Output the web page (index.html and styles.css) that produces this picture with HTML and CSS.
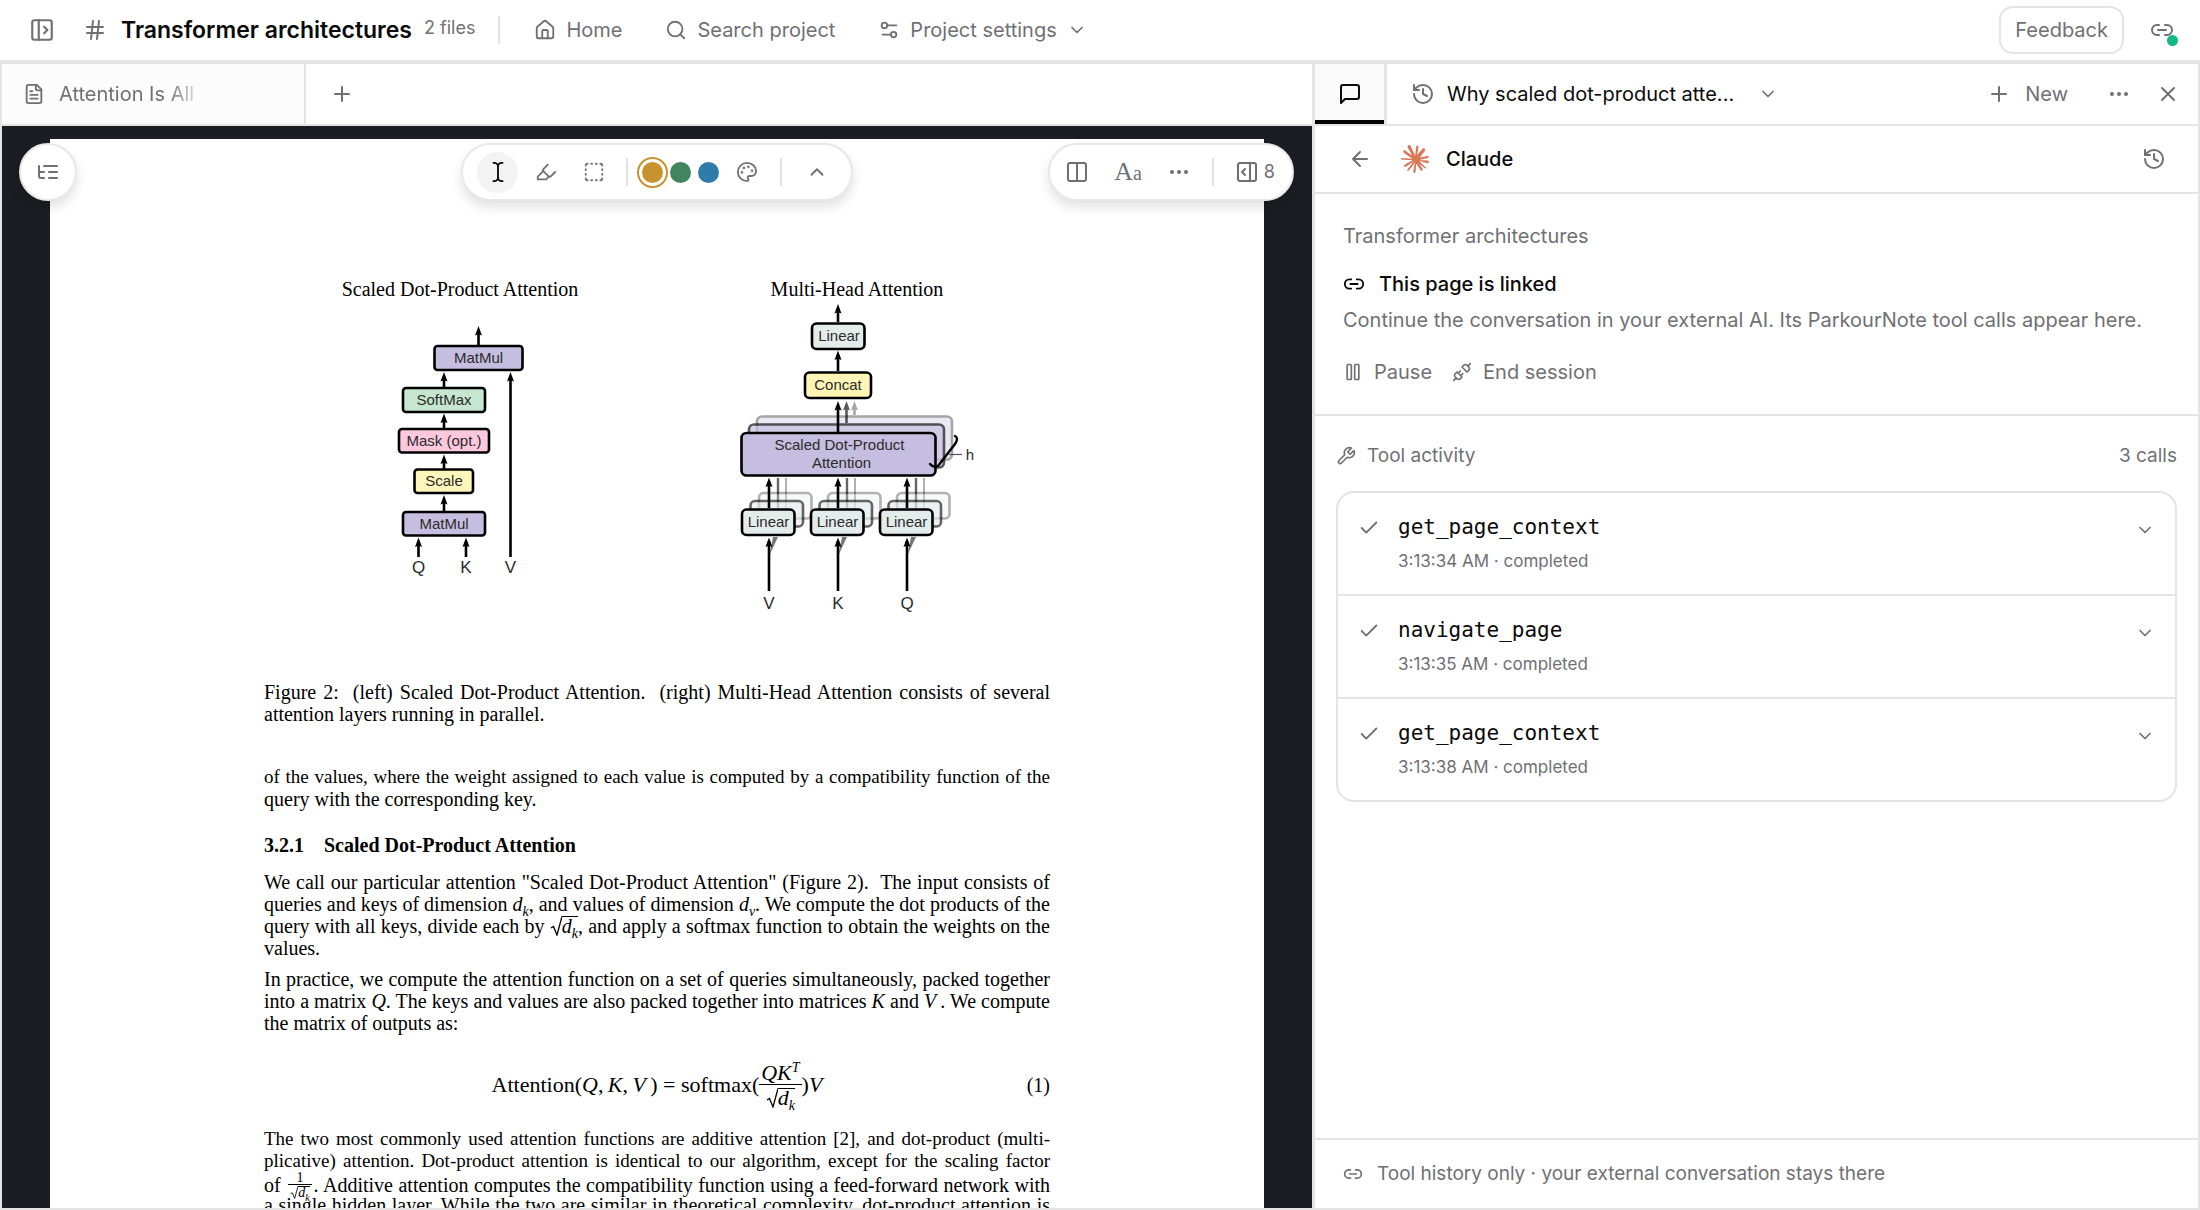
FILE: index.html
```html
<!DOCTYPE html>
<html lang="en">
<head>
<meta charset="utf-8">
<meta name="viewport" content="width=device-width, initial-scale=1">
<title>Transformer architectures</title>
<link rel="stylesheet" href="styles.css">
</head>
<body>
<svg class="sprite" aria-hidden="true">
  <symbol id="panel-left" viewBox="0 0 24 24"><rect x="3" y="3" width="18" height="18" rx="2"/><path d="M9 3v18M14 9l3 3-3 3"/></symbol>
  <symbol id="hash" viewBox="0 0 24 24"><path d="M4 9h16M4 15h16M10 3 8 21M16 3l-2 18"/></symbol>
  <symbol id="home" viewBox="0 0 24 24"><path d="M15 21v-8a1 1 0 0 0-1-1h-4a1 1 0 0 0-1 1v8"/><path d="M3 10a2 2 0 0 1 .709-1.528l7-6a2 2 0 0 1 2.582 0l7 6A2 2 0 0 1 21 10v9a2 2 0 0 1-2 2H5a2 2 0 0 1-2-2z"/></symbol>
  <symbol id="search" viewBox="0 0 24 24"><circle cx="11" cy="11" r="8"/><path d="m21 21-4.3-4.3"/></symbol>
  <symbol id="settings" viewBox="0 0 24 24"><path d="M20 7h-9M14 17H5"/><circle cx="17" cy="17" r="3"/><circle cx="7" cy="7" r="3"/></symbol>
  <symbol id="chevron-down" viewBox="0 0 24 24"><path d="m6 9 6 6 6-6"/></symbol>
  <symbol id="chevron-up" viewBox="0 0 24 24"><path d="m18 15-6-6-6 6"/></symbol>
  <symbol id="link" viewBox="0 0 24 24"><path d="M9 17H7A5 5 0 0 1 7 7h2M15 7h2a5 5 0 1 1 0 10h-2M8 12h8"/></symbol>
  <symbol id="file" viewBox="0 0 24 24"><path d="M15 2H6a2 2 0 0 0-2 2v16a2 2 0 0 0 2 2h12a2 2 0 0 0 2-2V7Z"/><path d="M14 2v4a2 2 0 0 0 2 2h4M10 9H8M16 13H8M16 17H8"/></symbol>
  <symbol id="plus" viewBox="0 0 24 24"><path d="M5 12h14M12 5v14"/></symbol>
  <symbol id="outline" viewBox="0 0 24 24"><path d="M21 12h-8M21 6H8M21 18h-8M3 6v4c0 1.100.9 2 2 2h3M3 10v6c0 1.100.9 2 2 2h3"/></symbol>
  <symbol id="ibeam" viewBox="0 0 24 24"><path d="M17 22h-1a4 4 0 0 1-4-4V6a4 4 0 0 1 4-4h1M7 22h1a4 4 0 0 0 4-4v-1M7 2h1a4 4 0 0 1 4 4v1"/></symbol>
  <symbol id="highlighter" viewBox="0 0 24 24"><path d="m9 11-6 6v3h9l3-3"/><path d="m22 12-4.600 4.600a2 2 0 0 1-2.800 0l-5.200-5.200a2 2 0 0 1 0-2.800L14 4"/></symbol>
  <symbol id="marquee" viewBox="0 0 24 24"><path d="M5 3a2 2 0 0 0-2 2M19 3a2 2 0 0 1 2 2M21 19a2 2 0 0 1-2 2M5 21a2 2 0 0 1-2-2M9 3h1M9 21h1M14 3h1M14 21h1M3 9v1M21 9v1M3 14v1M21 14v1"/></symbol>
  <symbol id="palette" viewBox="0 0 24 24"><circle cx="13.500" cy="6.500" r=".5"/><circle cx="17.500" cy="10.500" r=".5"/><circle cx="8.500" cy="7.500" r=".5"/><circle cx="6.500" cy="12.500" r=".5"/><path d="M12 2C6.500 2 2 6.500 2 12s4.500 10 10 10c.926 0 1.648-.746 1.648-1.688 0-.437-.18-.835-.437-1.125-.29-.289-.438-.652-.438-1.125a1.640 1.640 0 0 1 1.668-1.668h1.996c3.051 0 5.555-2.503 5.555-5.554C21.965 6.012 17.461 2 12 2z"/></symbol>
  <symbol id="columns" viewBox="0 0 24 24"><rect x="3" y="3" width="18" height="18" rx="2"/><path d="M12 3v18"/></symbol>
  <symbol id="panel-right" viewBox="0 0 24 24"><rect x="3" y="3" width="18" height="18" rx="2"/><path d="M15 3v18M10 15l-3-3 3-3"/></symbol>
  <symbol id="dots" viewBox="0 0 24 24"><circle cx="12" cy="12" r="1"/><circle cx="19" cy="12" r="1"/><circle cx="5" cy="12" r="1"/></symbol>
  <symbol id="chat" viewBox="0 0 24 24"><path d="M21 15a2 2 0 0 1-2 2H7l-4 4V5a2 2 0 0 1 2-2h14a2 2 0 0 1 2 2z"/></symbol>
  <symbol id="history" viewBox="0 0 24 24"><path d="M3 12a9 9 0 1 0 9-9 9.750 9.750 0 0 0-6.740 2.740L3 8"/><path d="M3 3v5h5M12 7v5l4 2"/></symbol>
  <symbol id="close" viewBox="0 0 24 24"><path d="M18 6 6 18M6 6l12 12"/></symbol>
  <symbol id="back" viewBox="0 0 24 24"><path d="m12 19-7-7 7-7M19 12H5"/></symbol>
  <symbol id="pause" viewBox="0 0 24 24"><rect x="14" y="3" width="5" height="18" rx="1"/><rect x="5" y="3" width="5" height="18" rx="1"/></symbol>
  <symbol id="unplug" viewBox="0 0 24 24"><path d="m19 5 3-3M2 22l3-3M6.300 20.300a2.400 2.400 0 0 0 3.400 0L12 18l-6-6-2.300 2.300a2.400 2.400 0 0 0 0 3.400ZM7.500 13.500 10 11M10.500 16.500 13 14M12 6l6 6 2.300-2.300a2.400 2.400 0 0 0 0-3.400l-2.600-2.600a2.400 2.400 0 0 0-3.400 0Z"/></symbol>
  <symbol id="wrench" viewBox="0 0 24 24"><path d="M14.700 6.300a1 1 0 0 0 0 1.400l1.600 1.600a1 1 0 0 0 1.400 0l3.770-3.770a6 6 0 0 1-7.940 7.940l-6.910 6.910a2.120 2.120 0 0 1-3-3l6.910-6.910a6 6 0 0 1 7.940-7.940l-3.760 3.760z"/></symbol>
  <symbol id="check" viewBox="0 0 24 24"><path d="M20 6 9 17l-5-5"/></symbol>
  <symbol id="radical" viewBox="0 0 12 20" preserveAspectRatio="none"><path d="M1 12l2.500-1.500L7 19 12 .5" fill="none" stroke="currentColor" stroke-width="1.300"/></symbol>
</svg>

<div class="app">
  <header class="topbar">
    <button class="icon-btn" aria-label="Open sidebar"><svg class="icon i26"><use href="#panel-left"/></svg></button>
    <div class="project">
      <svg class="icon i24"><use href="#hash"/></svg>
      <h1 class="project-name">Transformer architectures</h1>
      <span class="project-count">2 files</span>
    </div>
    <nav class="topnav">
      <a class="nav-link" href="#home"><svg class="icon i22"><use href="#home"/></svg>Home</a>
      <button class="nav-link"><svg class="icon i22"><use href="#search"/></svg>Search project</button>
      <button class="nav-link"><svg class="icon i22"><use href="#settings"/></svg>Project settings<svg class="icon i20"><use href="#chevron-down"/></svg></button>
    </nav>
    <button class="feedback">Feedback</button>
    <button class="icon-btn status" aria-label="Linked session"><svg class="icon i24"><use href="#link"/></svg><span class="status-dot"></span></button>
  </header>

  <main class="workspace">
    <section class="reader">
      <div class="tabs">
        <button class="tab"><svg class="icon i22"><use href="#file"/></svg><span class="tab-title">Attention Is All You Need</span></button>
        <button class="icon-btn tab-add" aria-label="New tab"><svg class="icon i24"><use href="#plus"/></svg></button>
      </div>
      <div class="viewer">
        <div class="pill pill-left">
          <button class="icon-btn" aria-label="Outline"><svg class="icon i24"><use href="#outline"/></svg></button>
        </div>
        <div class="pill pill-center">
          <button class="tool active" aria-label="Select text"><svg class="icon i22"><use href="#ibeam"/></svg></button>
          <button class="tool" aria-label="Highlight"><svg class="icon i22"><use href="#highlighter"/></svg></button>
          <button class="tool" aria-label="Select area"><svg class="icon i22"><use href="#marquee"/></svg></button>
          <span class="rule"></span>
          <span class="swatches">
            <button class="swatch gold" aria-label="Gold"></button>
            <button class="swatch green" aria-label="Green"></button>
            <button class="swatch blue" aria-label="Blue"></button>
          </span>
          <button class="icon-btn" aria-label="More colors"><svg class="icon i22"><use href="#palette"/></svg></button>
          <span class="rule"></span>
          <button class="icon-btn collapse" aria-label="Collapse"><svg class="icon i22"><use href="#chevron-up"/></svg></button>
        </div>
        <div class="pill pill-right">
          <button class="icon-btn" aria-label="Page layout"><svg class="icon i24"><use href="#columns"/></svg></button>
          <button class="icon-btn typeface" aria-label="Typography">A<span class="typeface-small">a</span></button>
          <button class="icon-btn" aria-label="More"><svg class="icon i24"><use href="#dots"/></svg></button>
          <span class="rule"></span>
          <button class="icon-btn notes"><svg class="icon i24"><use href="#panel-right"/></svg>8</button>
        </div>

        <article class="sheet">
          <div class="column">
            <figure class="figure">
              <svg class="diagram" viewBox="264 280 786 340" role="img" aria-label="Scaled dot-product attention and multi-head attention">
                <defs>
                  <g id="lin"><rect width="52.500" height="25.500" rx="4.500" fill="#e4eceb" stroke="#000" stroke-width="2.600"/></g>
                  <g id="head">
                    <path d="M45 510 45 478" stroke="#000" stroke-width="2" opacity=".3"/>
                    <path d="M37 510 37 478" stroke="#000" stroke-width="2.400" opacity=".6"/>
                    <use href="#lin" x="18" y="493" opacity=".3"/>
                    <use href="#lin" x="9.500" y="501" opacity=".6"/>
                    <path d="M28.500 555 37 537H32Z" fill="#777"/>
                    <use href="#lin" x="1" y="509.500"/>
                    <path class="bar" d="M28 508V482M28 591V541"/>
                    <path class="tip" d="M28 477.500 31.500 487Q28 485 24.500 487ZM28 537.500 31.500 547Q28 545 24.500 547Z"/>
                    <text class="label" x="27.500" y="527">Linear</text>
                  </g>
                </defs>
                <text class="fig-title" x="460" y="296">Scaled Dot-Product Attention</text>
                <g class="boxes">
                  <rect x="434.500" y="346" width="88" height="24" rx="3" fill="#c5bee0"/>
                  <rect x="403" y="388" width="82" height="24" rx="3" fill="#c6e6cf"/>
                  <rect x="399" y="429" width="90" height="23.500" rx="3" fill="#fbc8dd"/>
                  <rect x="414.500" y="469.500" width="58.500" height="23.500" rx="3" fill="#fdf6ba"/>
                  <rect x="403" y="512" width="82" height="23.500" rx="3" fill="#c5bee0"/>
                </g>
                <path class="bar" d="M478.500 345V331M444 387V377M444 428V418M444 469V459M444 511V500M418.500 557V542M466 557V542M510.500 557V377"/>
                <path class="tip" d="M478.500 326l3.500 9.500q-3.500-2-7 0ZM444 372l3.500 9.500q-3.500-2-7 0ZM444 413.500l3.500 9.500q-3.500-2-7 0ZM444 454.500l3.500 9.500q-3.500-2-7 0ZM444 495l3.500 9.500q-3.500-2-7 0ZM418.500 537.500l3.500 9.500q-3.500-2-7 0ZM466 537.500l3.500 9.500q-3.500-2-7 0ZM510.500 372l3.500 9.500q-3.500-2-7 0Z"/>
                <g class="label">
                  <text x="478.500" y="363">MatMul</text>
                  <text x="444" y="405">SoftMax</text>
                  <text x="444" y="446">Mask (opt.)</text>
                  <text x="444" y="486">Scale</text>
                  <text x="444" y="529">MatMul</text>
                </g>
                <g class="label var">
                  <text x="418.500" y="573">Q</text><text x="466" y="573">K</text><text x="510.500" y="573">V</text>
                </g>

                <text class="fig-title" x="857" y="296">Multi-Head Attention</text>
                <g class="boxes">
                  <rect x="757" y="416.500" width="195" height="43" rx="5" fill="#c5bee0" opacity=".35"/>
                  <rect x="749" y="424.500" width="195" height="43" rx="5" fill="#c5bee0" opacity=".65"/>
                  <rect x="741.500" y="433" width="194" height="42.500" rx="5" fill="#c5bee0"/>
                  <rect x="812" y="323.500" width="52.500" height="25.500" rx="4.500" fill="#e4eceb"/>
                  <rect x="805" y="372.500" width="66" height="25.500" rx="4.500" fill="#fff6b6"/>
                </g>
                <g opacity=".35"><path class="bar" d="M854.500 415V406"/><path class="tip" d="M854.500 401l3.500 9.500q-3.500-2-7 0Z"/></g>
                <g opacity=".65"><path class="bar" d="M846.500 423V406"/><path class="tip" d="M846.500 401l3.500 9.500q-3.500-2-7 0Z"/></g>
                <path class="bar" d="M838 322V309M838 371V355M838 432V406"/>
                <path class="tip" d="M838 304l3.500 9.500q-3.500-2-7 0ZM838 350.500l3.500 9.500q-3.500-2-7 0ZM838 401l3.500 9.500q-3.500-2-7 0Z"/>
                <path d="M930 464q3 4 8 2l17-22q4-6 0-8" fill="none" stroke="#000" stroke-width="2.400" stroke-linecap="round"/>
                <path d="M949 454.500h13" stroke="#555" stroke-width="1.200"/>
                <g class="label">
                  <text x="839" y="341">Linear</text>
                  <text x="838" y="390">Concat</text>
                  <text x="839.500" y="450">Scaled Dot-Product</text>
                  <text x="841.500" y="468">Attention</text>
                  <text x="970" y="460">h</text>
                </g>
                <use href="#head" x="741"/>
                <use href="#head" x="810"/>
                <use href="#head" x="879"/>
                <g class="label var">
                  <text x="769" y="609">V</text><text x="838" y="609">K</text><text x="907" y="609">Q</text>
                </g>
              </svg>
              <figcaption class="caption"><span class="full">Figure 2:&nbsp; (left) Scaled Dot-Product Attention.&nbsp; (right) Multi-Head Attention consists of several</span> <span class="line">attention layers running in parallel.</span></figcaption>
            </figure>
            <p class="para"><span class="full tight">of the values, where the weight assigned to each value is computed by a compatibility function of the</span> <span class="line">query with the corresponding key.</span></p>
            <h2 class="subhead"><span>3.2.1</span><span>Scaled Dot-Product Attention</span></h2>
            <p class="para"><span class="full">We call our particular attention "Scaled Dot-Product Attention" (Figure 2).&nbsp; The input consists of</span> <span class="full">queries and keys of dimension <i>d<sub>k</sub></i>, and values of dimension <i>d<sub>v</sub></i>. We compute the dot products of the</span> <span class="full">query with all keys, divide each by <span class="root"><svg class="root-sign"><use href="#radical"/></svg><i class="radicand">d<sub>k</sub></i></span>, and apply a softmax function to obtain the weights on the</span> <span class="line">values.</span></p>
            <p class="para"><span class="full">In practice, we compute the attention function on a set of queries simultaneously, packed together</span> <span class="full">into a matrix <i>Q</i>. The keys and values are also packed together into matrices <i>K</i> and <i>V</i>&thinsp;. We compute</span> <span class="line">the matrix of outputs as:</span></p>
            <div class="equation">
              <span class="formula">Attention(<i>Q</i>,&thinsp;<i>K</i>,&thinsp;<i>V</i>&thinsp;) = softmax(<span class="frac"><span class="num"><i>QK<sup>T</sup></i></span><span class="den"><span class="root"><svg class="root-sign"><use href="#radical"/></svg><i class="radicand">d<sub>k</sub></i></span></span></span>)<i>V</i></span>
              <span class="eq-number">(1)</span>
            </div>
            <p class="para"><span class="full tight">The two most commonly used attention functions are additive attention [2], and dot-product (multi-</span> <span class="full tight">plicative) attention. Dot-product attention is identical to our algorithm, except for the scaling factor</span> <span class="full">of <span class="frac small"><span class="num">1</span><span class="den"><span class="root"><svg class="root-sign"><use href="#radical"/></svg><i class="radicand">d<sub>k</sub></i></span></span></span>. Additive attention computes the compatibility function using a feed-forward network with</span> <span class="full">a single hidden layer. While the two are similar in theoretical complexity, dot-product attention is</span></p>
          </div>
        </article>
      </div>
    </section>

    <aside class="panel">
      <div class="panel-tabs">
        <button class="chat-tab" aria-label="Chat"><svg class="icon i24"><use href="#chat"/></svg></button>
        <button class="thread"><svg class="icon i24"><use href="#history"/></svg><span class="thread-title">Why scaled dot-product atte...</span><svg class="icon i20"><use href="#chevron-down"/></svg></button>
        <div class="panel-actions">
          <button class="new-btn"><svg class="icon i24"><use href="#plus"/></svg>New</button>
          <button class="icon-btn" aria-label="More"><svg class="icon i24"><use href="#dots"/></svg></button>
          <button class="icon-btn" aria-label="Close"><svg class="icon i24"><use href="#close"/></svg></button>
        </div>
      </div>
      <div class="agent">
        <button class="icon-btn" aria-label="Back"><svg class="icon i24"><use href="#back"/></svg></button>
        <svg class="claude" viewBox="0 0 24 24" aria-hidden="true"><path d="m4.7144 15.9555 4.7174-2.6471.079-.2307-.079-.1275h-.2307l-.7893-.0486-2.6956-.0729-2.3375-.0971-2.2646-.1214-.5707-.1215-.5343-.7042.0546-.3522.4797-.3218.686.0608 1.5179.1032 2.2767.1578 1.6514.0972 2.4468.255h.3886l.0546-.1579-.1336-.0971-.1032-.0972L6.973 9.8356l-2.55-1.6879-1.3356-.9714-.7225-.4918-.3643-.4614-.1578-1.0078.6557-.7225.8803.0607.2246.0607.8925.686 1.9064 1.4754 2.4893 1.8336.3643.3035.1457-.1032.0182-.0728-.164-.2733-1.3539-2.4467-1.445-2.4893-.6435-1.032-.17-.6194c-.0607-.255-.1032-.4674-.1032-.7285L6.287.1335 6.6997 0l.9957.1336.419.3642.6192 1.4147 1.0018 2.2282 1.5543 3.0296.4553.8985.2429.8318.091.255h.1579v-.1457l.1275-1.706.2368-2.0947.2307-2.6957.0789-.7589.3764-.9107.7468-.4918.5828.2793.4797.686-.0668.4433-.2853 1.8517-.5586 2.9021-.3643 1.9429h.2125l.2429-.2429.9835-1.3053 1.6514-2.0643.7286-.8196.85-.9046.5464-.4311h1.0321l.759 1.1293-.34 1.1657-1.0625 1.3478-.8804 1.1414-1.2628 1.7-.7893 1.36.0729.1093.1882-.0183 2.8535-.607 1.5421-.2794 1.8396-.3157.8318.3886.091.3946-.3278.8075-1.967.4857-2.3072.4614-3.4364.8136-.0425.0304.0486.0607 1.5482.1457.6618.0364h1.621l3.0175.2247.7892.522.4736.6376-.079.4857-1.2142.6193-1.6393-.3886-3.825-.9107-1.3113-.3279h-.1822v.1093l1.0929 1.0686 2.0035 1.8092 2.5075 2.3314.1275.5768-.3218.4554-.34-.0486-2.2039-1.6575-.85-.7468-1.9246-1.621h-.1275v.17l.4432.6496 2.3436 3.5214.1214 1.0807-.17.3521-.6071.2125-.6679-.1214-1.3721-1.9246L14.38 17.959l-1.1414-1.9428-.1397.079-.674 7.2552-.3156.3703-.7286.2793-.6071-.4614-.3218-.7468.3218-1.4753.3886-1.9246.3157-1.53.2853-1.9004.17-.6314-.0121-.0425-.1397.0182-1.4328 1.9672-2.1796 2.9446-1.7243 1.8456-.4128.164-.7164-.3704.0667-.6618.4008-.5889 2.386-3.0357 1.4389-1.882.929-1.0868-.0062-.1579h-.0546l-6.3385 4.1164-1.1293.1457-.4857-.4554.0608-.7467.2307-.2429 1.9064-1.3114Z"/></svg>
        <h2 class="agent-name">Claude</h2>
        <button class="icon-btn agent-history" aria-label="History"><svg class="icon i24"><use href="#history"/></svg></button>
      </div>
      <section class="session">
        <p class="session-project">Transformer architectures</p>
        <h3 class="session-title"><svg class="icon i22"><use href="#link"/></svg>This page is linked</h3>
        <p class="session-text">Continue the conversation in your external AI. Its ParkourNote tool calls appear here.</p>
        <div class="session-actions">
          <button class="text-btn"><svg class="icon i20"><use href="#pause"/></svg>Pause</button>
          <button class="text-btn"><svg class="icon i20"><use href="#unplug"/></svg>End session</button>
        </div>
      </section>
      <section class="activity">
        <div class="activity-head">
          <h3 class="activity-title"><svg class="icon i20"><use href="#wrench"/></svg>Tool activity</h3>
          <span>3 calls</span>
        </div>
        <ul class="calls">
          <li><button class="call"><svg class="icon i22"><use href="#check"/></svg><span class="call-body"><span class="call-name">get_page_context</span><span class="call-meta">3:13:34 AM · completed</span></span><svg class="icon i20 call-toggle"><use href="#chevron-down"/></svg></button></li>
          <li><button class="call"><svg class="icon i22"><use href="#check"/></svg><span class="call-body"><span class="call-name">navigate_page</span><span class="call-meta">3:13:35 AM · completed</span></span><svg class="icon i20 call-toggle"><use href="#chevron-down"/></svg></button></li>
          <li><button class="call"><svg class="icon i22"><use href="#check"/></svg><span class="call-body"><span class="call-name">get_page_context</span><span class="call-meta">3:13:38 AM · completed</span></span><svg class="icon i20 call-toggle"><use href="#chevron-down"/></svg></button></li>
        </ul>
      </section>
      <footer class="panel-foot"><svg class="icon i20"><use href="#link"/></svg>Tool history only · your external conversation stays there</footer>
    </aside>
  </main>
</div>
</body>
</html>
```
FILE: styles.css
```css
:root {
  --line: #e4e4e5;
  --muted: #707074;
  --ink: #0a0a0a;
  --dark: #1a1d21;
  --serif: "Liberation Serif", "Times New Roman", serif;
}

*, *::before, *::after { box-sizing: border-box; }

body {
  margin: 0;
  font: 20px/28px Inter, "Liberation Sans", sans-serif;
  color: var(--muted);
  background: #fff;
}

h1, h2, h3, p, ul, figure { margin: 0; padding: 0; font: inherit; }
ul { list-style: none; }

button {
  margin: 0;
  padding: 0;
  border: 0;
  background: none;
  color: inherit;
  font: inherit;
  cursor: pointer;
}

.sprite { position: absolute; width: 0; height: 0; }

.icon {
  flex: none;
  display: block;
  fill: none;
  stroke: currentColor;
  stroke-width: 2;
  stroke-linecap: round;
  stroke-linejoin: round;
}
.i20 { width: 20px; height: 20px; }
.i22 { width: 22px; height: 22px; }
.i24 { width: 24px; height: 24px; }
.i26 { width: 26px; height: 26px; }

.icon-btn { display: flex; align-items: center; justify-content: center; }

.app { display: flex; flex-direction: column; height: 100vh; }

/* Top bar */
.topbar {
  flex: none;
  display: flex;
  align-items: center;
  height: 64px;
  padding: 0 26px 0 29px;
  border-bottom: 4px solid var(--line);
}
.project { display: flex; align-items: center; margin-left: 28px; }
.project-name { margin-left: 14px; font-size: 23px; font-weight: 600; color: var(--ink); }
.project-count { margin: 0 23px 4px 12px; font-size: 18px; line-height: 24px; }
.topnav {
  display: flex;
  align-items: center;
  gap: 43px;
  height: 28px;
  padding-left: 34px;
  border-left: 2px solid var(--line);
}
.nav-link { display: flex; align-items: center; gap: 10px; color: inherit; text-decoration: none; }
.feedback {
  height: 48px;
  margin-left: auto;
  padding: 0 14px;
  border: 2px solid var(--line);
  border-radius: 14px;
}
.status { position: relative; margin-left: 26px; }
.status-dot {
  position: absolute;
  right: -4px;
  bottom: -4px;
  width: 11px;
  height: 11px;
  border-radius: 50%;
  background: #10b981;
}

.workspace {
  flex: 1;
  min-height: 0;
  display: grid;
  grid-template-columns: minmax(0, 1312fr) minmax(0, 888fr);
  border-bottom: 2px solid var(--line);
}

/* Reader */
.reader { display: flex; flex-direction: column; min-height: 0; border-left: 2px solid var(--line); }
.tabs { flex: none; display: flex; height: 62px; border-bottom: 2px solid var(--line); }
.tab {
  display: flex;
  align-items: center;
  gap: 14px;
  width: 304px;
  padding: 0 100px 0 21px;
  border-right: 2px solid var(--line);
  background: #fcfcfc;
}
.tab-title {
  overflow: hidden;
  white-space: nowrap;
  mask-image: linear-gradient(90deg, #000 75%, transparent);
}
.tab-add { margin-left: 24px; }

.viewer { position: relative; flex: 1; min-height: 0; overflow: hidden; padding: 13px 48px 0; background: var(--dark); }

.pill {
  position: absolute;
  top: 17px;
  display: flex;
  align-items: center;
  height: 58px;
  border: 2px solid #e8e8ea;
  border-radius: 29px;
  background: #fff;
  box-shadow: 0 6px 12px rgb(0 0 0 / 12%);
}
.pill-left { left: 17px; width: 58px; justify-content: center; }
.pill-center { left: 50%; transform: translateX(-50%); padding: 0 14px 0 14px; }
.pill-right { right: 18px; gap: 25px; padding: 0 17px 0 15px; }
.rule { width: 2px; height: 28px; background: var(--line); }
.tool { display: flex; align-items: center; justify-content: center; width: 41px; height: 41px; margin-right: 7px; border-radius: 50%; }
.tool.active { background: #f3f3f3; color: var(--ink); }
.tool + .rule { margin-left: 5px; }
.swatches { display: flex; gap: 7px; margin: 0 17px 0 14px; }
.swatch { width: 21px; height: 21px; border-radius: 50%; }
.gold { background: #c8922e; box-shadow: 0 0 0 3px #fff, 0 0 0 5px #c8922e; }
.green { background: #41855f; }
.blue { background: #2f7cab; }
.pill-center .rule + .collapse { margin: 0 9px 0 24px; }
.pill-center .icon-btn + .rule { margin-left: 22px; }
.pill-right .rule { margin: 0 -4px; }
.typeface { align-items: baseline; font: 26px/28px var(--serif); }
.typeface-small { font-size: 20px; }
.notes { gap: 5px; font-size: 18px; }

/* Document page */
.sheet { min-height: 100%; padding-top: 141px; background: #fff; }
.column { max-width: 786px; margin: 0 auto; font: 20px/22px var(--serif); color: #000; }
.diagram { display: block; width: 100%; margin-bottom: 61px; overflow: visible; }
.full, .line { display: block; white-space: nowrap; height: 22px; }
.full { text-align: justify; text-align-last: justify; }
.tight { font-size: 19px; }
.caption { margin-bottom: 41px; }
.subhead { display: flex; gap: 20px; margin: 24px 0 15px; font-weight: 700; }
.para + .para { margin-top: 9px; }
.column sub, .column sup { font-size: 14px; line-height: 0; }

.root { display: inline-flex; align-items: baseline; }
.root-sign { align-self: stretch; width: 12px; height: 20px; }
.radicand { border-top: 1px solid #000; line-height: 18px; }
.equation { display: grid; grid-template-columns: 1fr auto 1fr; align-items: center; height: 94px; padding-top: 8px; }
.formula { grid-column: 2; display: flex; align-items: center; white-space: pre; font-size: 22px; }
.eq-number { justify-self: end; }
.frac { display: inline-flex; flex-direction: column; align-items: center; }
.num { padding: 0 2px; }
.den { align-self: stretch; display: flex; justify-content: center; border-top: 1px solid #000; padding-top: 3px; }
.small { font-size: 14px; line-height: 12px; vertical-align: 10px; margin: 0 2px; }
.small .den { padding: 1px 2px 0; }
.small .radicand { line-height: 12px; }
.small .root-sign { width: 8px; height: 13px; }
.column .small sub { font-size: 10px; }

.fig-title { font: 20px var(--serif); text-anchor: middle; }
.label { font: 15px "Liberation Sans", Arial, sans-serif; text-anchor: middle; fill: #2b2b2b; }
.var { font-size: 17px; }
.boxes { stroke: #000; stroke-width: 2.6px; }
.bar { fill: none; stroke: #000; stroke-width: 2.6px; }

/* Side panel */
.panel {
  display: flex;
  flex-direction: column;
  min-height: 0;
  border-left: 3px solid var(--line);
  border-right: 2px solid var(--line);
}
.panel-tabs { flex: none; display: flex; height: 62px; border-bottom: 2px solid var(--line); }
.chat-tab {
  display: grid;
  place-items: center;
  width: 72px;
  border-right: 3px solid var(--line);
  background: #fafafa;
  box-shadow: inset 0 -4px #000;
  color: var(--ink);
}
.thread { display: flex; align-items: center; gap: 12px; margin-left: 24px; }
.thread-title { margin-right: 12px; color: var(--ink); }
.panel-actions { display: flex; align-items: center; gap: 25px; margin-left: auto; padding-right: 18px; }
.new-btn { display: flex; align-items: center; gap: 14px; margin-right: 14px; }

.agent { flex: none; display: flex; align-items: center; height: 68px; padding: 0 32px 0 33px; border-bottom: 2px solid var(--line); }
.claude { width: 28px; height: 28px; margin: 0 17px 0 29px; fill: #d97757; }
.agent-name { font-weight: 500; color: var(--ink); }
.agent-history { margin-left: auto; }

.session { padding: 28px; border-bottom: 2px solid var(--line); }
.session-title { display: flex; align-items: center; gap: 14px; margin: 20px 0 8px; font-weight: 500; color: var(--ink); }
.session-actions { display: flex; gap: 20px; margin-top: 24px; }
.text-btn { display: flex; align-items: center; gap: 11px; }

.activity { flex: 1; min-height: 0; padding: 26px 21px 0; }
.activity-head { display: flex; justify-content: space-between; margin-bottom: 21px; font-size: 19px; }
.activity-title { display: flex; align-items: center; gap: 11px; }
.calls { border: 2px solid var(--line); border-radius: 18px; }
.calls li + li { border-top: 2px solid var(--line); }
.call { display: flex; align-items: flex-start; width: 100%; padding: 20px 20px 21px; text-align: left; }
.call > .icon { margin-top: 4px; }
.call > .call-toggle { margin-top: 7px; }
.call-body { flex: 1; display: grid; gap: 8px; margin-left: 18px; }
.call-name { font: 21px/28px "DejaVu Sans Mono", monospace; color: var(--ink); }
.call-meta { font-size: 17px; line-height: 24px; }

.panel-foot { flex: none; display: flex; align-items: center; gap: 14px; height: 70px; padding: 0 28px; border-top: 2px solid var(--line); font-size: 19px; }
```
